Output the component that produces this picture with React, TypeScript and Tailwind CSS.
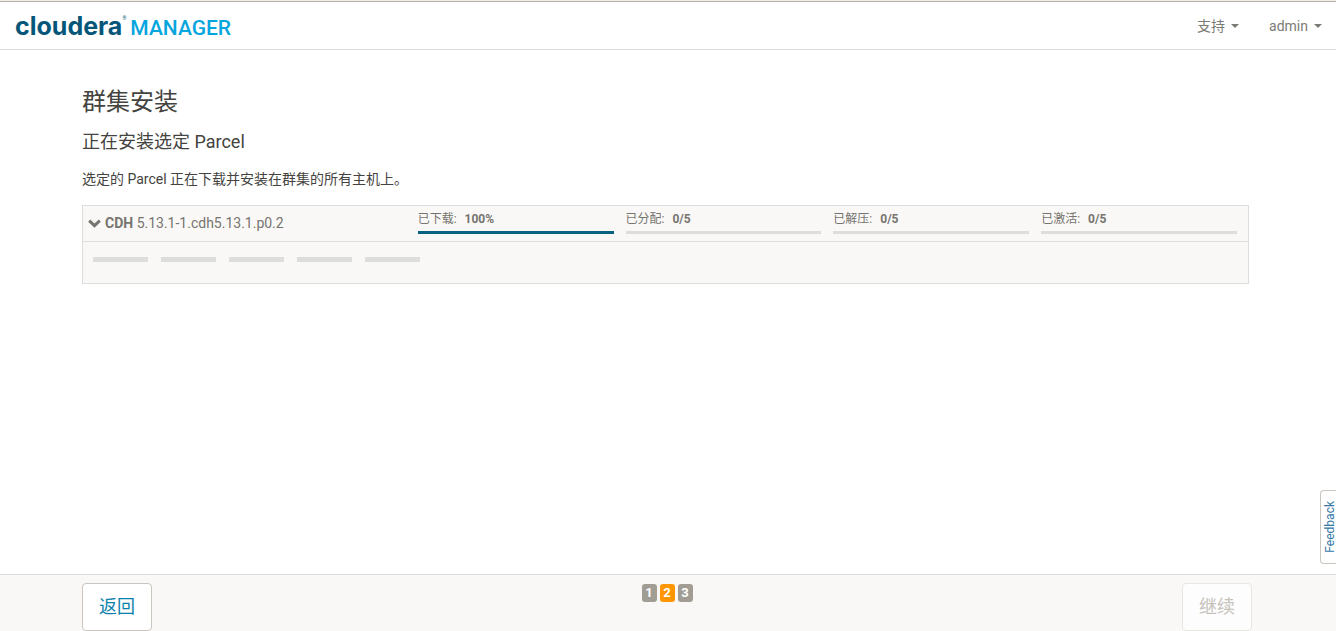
import React from "react";

type Stage = { label: string; value: string; percent: number };

const stages: Stage[] = [
  { label: "已下载", value: "100%", percent: 100 },
  { label: "已分配", value: "0/5", percent: 0 },
  { label: "已解压", value: "0/5", percent: 0 },
  { label: "已激活", value: "0/5", percent: 0 },
];

const hosts = [1, 2, 3, 4, 5];
const steps = [1, 2, 3];
const currentStep = 2;

function Caret() {
  return (
    <svg width="8" height="4" viewBox="0 0 8 4" fill="currentColor" aria-hidden="true">
      <path d="M0 0h8L4 4z" />
    </svg>
  );
}

function MenuButton({ children }: { children: React.ReactNode }) {
  return (
    <button type="button" className="flex items-center gap-1.5 text-[14px] leading-5 text-[#7b7b75]">
      {children}
      <Caret />
    </button>
  );
}

function Header() {
  return (
    <header className="flex h-12 shrink-0 items-center justify-between border-b border-[#dcdcdb] pr-[14px] pl-[15px]">
      <a href="#" className="flex items-baseline pt-0.5 whitespace-nowrap leading-7">
        <span className="font-['Inter',sans-serif] text-[25px] font-bold text-[#06567a]">cloudera</span>
        <span className="self-start pt-1 text-[5px] leading-none text-[#06567a]">®</span>
        <span className="ml-1 text-[21px] font-medium text-[#05a5de]">MANAGER</span>
      </a>
      <nav className="flex items-center gap-[30px]">
        <MenuButton>支持</MenuButton>
        <MenuButton>admin</MenuButton>
      </nav>
    </header>
  );
}

function StageProgress({ label, value, percent }: Stage) {
  return (
    <div>
      <div className="flex gap-2 text-[12px] leading-4 text-[#76746f]">
        <span>{label}:</span>
        <strong className="font-bold">{value}</strong>
      </div>
      <div className="mt-1 h-[3px] bg-[#dddddb]" role="progressbar" aria-label={label} aria-valuenow={percent}>
        <div className="h-full bg-[#07617f]" style={{ width: `${percent}%` }} />
      </div>
    </div>
  );
}

function ParcelPanel() {
  return (
    <section className="mt-4 mr-[3px] border border-[#dddddb] bg-[#f9f8f6]">
      <div className="flex h-9 border-b border-[#dddddb] pr-[11px]">
        <button type="button" className="flex flex-1 items-center gap-1 pb-px pl-[5px] text-left text-[14px] leading-5 text-[#76746f]">
          <svg width="13" height="9" viewBox="0 0 13 9" fill="none" stroke="currentColor" strokeWidth="3" aria-hidden="true">
            <path d="M1.2 1.6l5.3 5 5.3-5" />
          </svg>
          <span>
            <strong className="font-bold">CDH</strong> 5.13.1-1.cdh5.13.1.p0.2
          </span>
        </button>
        <div className="grid w-[71%] grid-cols-4 gap-3 pt-[5px]">
          {stages.map((stage) => (
            <StageProgress key={stage.label} {...stage} />
          ))}
        </div>
      </div>
      <div className="flex h-[41px] gap-[13px] px-[10px] pt-[15px]">
        {hosts.map((host) => (
          <div key={host} className="h-[5px] w-[55px] bg-[#dddddb]" />
        ))}
      </div>
    </section>
  );
}

function Footer() {
  return (
    <footer className="flex shrink-0 items-start justify-between border-t border-[#dcdcdb] bg-[#f9f8f6] pt-2 pr-[84px] pl-[82px]">
      <button type="button" className="h-12 w-[70px] rounded border border-[#cac6bf] bg-white pb-0.5 text-[18px] text-[#0b7fad]">
        返回
      </button>
      <ol className="flex gap-[3px] pt-px">
        {steps.map((step) => (
          <li
            key={step}
            className={
              step === currentStep
                ? "h-[18px] w-[15px] rounded-[3px] bg-[#ff9600] text-center text-[13px] leading-[18px] font-bold text-white"
                : "h-[18px] w-[15px] rounded-[3px] bg-[#a19d94] text-center text-[13px] leading-[18px] font-bold text-white"
            }
          >
            {step}
          </li>
        ))}
      </ol>
      <button type="button" disabled className="h-12 w-[70px] rounded border border-[#e8e6e2] bg-[#fdfdfd] pb-0.5 text-[18px] text-[#c5c2bb]">
        继续
      </button>
    </footer>
  );
}

export default function App() {
  return (
    <div className="relative flex min-h-screen flex-col border-t border-[#efebe7] bg-white font-['Roboto','Noto_Sans_CJK_SC',sans-serif] text-[#444340]">
      <div className="h-px shrink-0 bg-[#b8b2ad]" />
      <Header />
      <main className="flex-1 pt-9 pr-[84px] pl-[82px]">
        <h1 className="text-[24px] leading-8">群集安装</h1>
        <h2 className="mt-3 text-[18px] leading-6">正在安装选定 Parcel</h2>
        <p className="mt-[15px] text-[14px] leading-5">选定的 Parcel 正在下载并安装在群集的所有主机上。</p>
        <ParcelPanel />
      </main>
      <Footer />
      <button
        type="button"
        className="absolute right-0 bottom-[67px] flex h-[74px] w-4 items-center justify-end rounded-l border border-r-0 border-[#cac6bf] bg-white text-[12px] leading-3 text-[#3377a5]"
      >
        <span className="rotate-180 [writing-mode:vertical-rl]">Feedback</span>
      </button>
    </div>
  );
}
